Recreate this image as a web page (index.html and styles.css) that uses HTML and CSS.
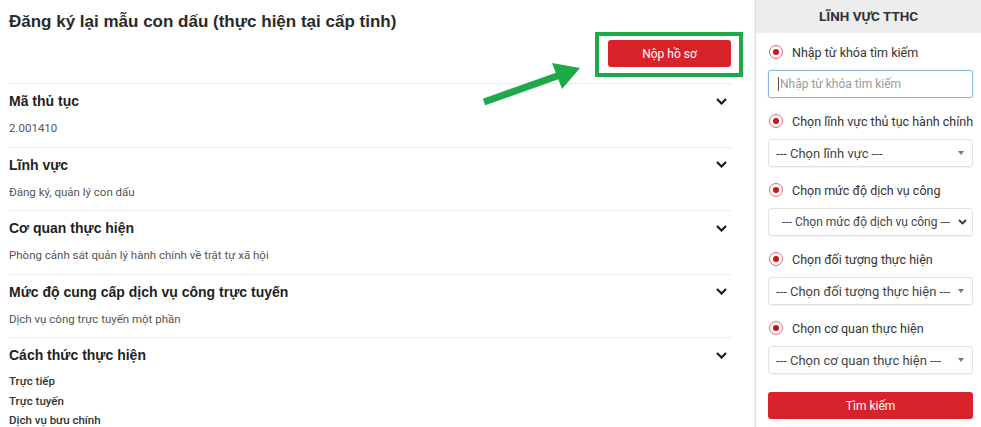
FILE: index.html
```html
<!DOCTYPE html>
<html lang="vi">
<head>
<meta charset="utf-8">
<title>Đăng ký lại mẫu con dấu</title>
<link rel="stylesheet" href="styles.css">
</head>
<body>
<div class="page">
  <main class="main">
    <h1 class="title">Đăng ký lại mẫu con dấu (thực hiện tại cấp tỉnh)</h1>
    <div class="cta-row">
      <div class="cta">
        <button class="btn-submit" type="button">Nộp hồ sơ</button>
        <span class="frame"></span>
      </div>
    </div>
    <svg class="arrow" width="600" height="120" viewBox="0 0 600 120" aria-hidden="true">
      <line x1="484" y1="102" x2="560" y2="75" stroke="#1eaa49" stroke-width="7" stroke-linecap="butt"/>
      <polygon points="580,68 552,63 562,89" fill="#1eaa49"/>
    </svg>

    <section class="item">
      <div class="item-head"><h2>Mã thủ tục</h2><svg class="chev" width="11" height="7" viewBox="0 0 11 7"><path d="M1 1 L5.5 5.5 L10 1" fill="none" stroke="#1a1a1a" stroke-width="2.2"/></svg></div>
      <p class="item-val">2.001410</p>
    </section>
    <section class="item">
      <div class="item-head"><h2>Lĩnh vực</h2><svg class="chev" width="11" height="7" viewBox="0 0 11 7"><path d="M1 1 L5.5 5.5 L10 1" fill="none" stroke="#1a1a1a" stroke-width="2.2"/></svg></div>
      <p class="item-val">Đăng ký, quản lý con dấu</p>
    </section>
    <section class="item">
      <div class="item-head"><h2>Cơ quan thực hiện</h2><svg class="chev" width="11" height="7" viewBox="0 0 11 7"><path d="M1 1 L5.5 5.5 L10 1" fill="none" stroke="#1a1a1a" stroke-width="2.2"/></svg></div>
      <p class="item-val">Phòng cảnh sát quản lý hành chính về trật tự xã hội</p>
    </section>
    <section class="item">
      <div class="item-head"><h2>Mức độ cung cấp dịch vụ công trực tuyến</h2><svg class="chev" width="11" height="7" viewBox="0 0 11 7"><path d="M1 1 L5.5 5.5 L10 1" fill="none" stroke="#1a1a1a" stroke-width="2.2"/></svg></div>
      <p class="item-val">Dịch vụ công trực tuyến một phần</p>
    </section>
    <section class="item item-last">
      <div class="item-head"><h2>Cách thức thực hiện</h2><svg class="chev" width="11" height="7" viewBox="0 0 11 7"><path d="M1 1 L5.5 5.5 L10 1" fill="none" stroke="#1a1a1a" stroke-width="2.2"/></svg></div>
      <ul class="ways">
        <li>Trực tiếp</li>
        <li>Trực tuyến</li>
        <li>Dịch vụ bưu chính</li>
      </ul>
    </section>
  </main>

  <aside class="side">
    <div class="side-head">LĨNH VỰC TTHC</div>
    <div class="side-body">
      <div class="group">
        <label class="radio-label"><span class="radio"></span>Nhập từ khóa tìm kiếm</label>
        <div class="input"><span class="caret"></span><span class="ph">Nhập từ khóa tìm kiếm</span></div>
      </div>
      <div class="group">
        <label class="radio-label"><span class="radio"></span>Chọn lĩnh vực thủ tục hành chính</label>
        <div class="select"><span>--- Chọn lĩnh vực ---</span><span class="tri"></span></div>
      </div>
      <div class="group">
        <label class="radio-label"><span class="radio"></span>Chọn mức độ dịch vụ công</label>
        <div class="select select-alt"><span>--- Chọn mức độ dịch vụ công ---</span><svg width="9" height="6" viewBox="0 0 9 6"><path d="M1 1 L4.5 4.5 L8 1" fill="none" stroke="#333" stroke-width="1.8"/></svg></div>
      </div>
      <div class="group">
        <label class="radio-label"><span class="radio"></span>Chọn đối tượng thực hiện</label>
        <div class="select"><span>--- Chọn đối tượng thực hiện ---</span><span class="tri"></span></div>
      </div>
      <div class="group">
        <label class="radio-label"><span class="radio"></span>Chọn cơ quan thực hiện</label>
        <div class="select"><span>--- Chọn cơ quan thực hiện ---</span><span class="tri"></span></div>
      </div>
      <button class="btn-search" type="button">Tìm kiếm</button>
    </div>
  </aside>
</div>
</body>
</html>
```
FILE: styles.css
```css
* { box-sizing: border-box; }
html, body { margin: 0; padding: 0; background: #fff; }
body { font-family: Roboto, "Liberation Sans", Arial, sans-serif; color: #333; }

.page { display: flex; align-items: flex-start; width: 981px; height: 427px; overflow: hidden; }

.main { position: relative; width: 731px; padding-left: 9px; margin-right: 24px; flex: none; }

.title {
  margin: 10px 0 0;
  font-family: "Liberation Sans", Arial, sans-serif;
  font-size: 17px; line-height: 23px; font-weight: bold; color: #2a2a2a;
}

.cta-row { display: flex; justify-content: flex-end; margin-top: 7px; margin-bottom: 16px; }
.cta { position: relative; }
.btn-submit {
  display: block; width: 123px; height: 27px; border: 0; border-radius: 3px;
  background: #d8232a; color: #fff; font-family: Roboto, sans-serif; font-size: 12px; padding: 0;
}
.frame { position: absolute; left: -13px; right: -12px; top: -8px; bottom: -10px; border: 4px solid #1eaa49; }
.arrow { position: absolute; left: 0; top: 0; pointer-events: none; }

.item { border-top: 1px solid #ececec; padding: 8px 0 10.5px; }
.item-head { display: flex; justify-content: space-between; align-items: center; height: 18px; }
.item-head h2 {
  margin: 0; font-family: "Liberation Sans", Arial, sans-serif;
  font-size: 14px; line-height: 18px; font-weight: bold; color: #1f1f1f;
}
.chev { margin-right: 4px; }
.item-val { margin: 10px 0 0; font-size: 11.5px; line-height: 16px; color: #555; }
.ways { list-style: none; margin: 8px 0 0; padding: 0; }
.ways li { font-size: 11.5px; line-height: 19.5px; font-weight: 500; color: #333; }

.side { flex: 1; border-left: 1px solid #e0e0e0; box-shadow: -1px 0 0 #f0f0f0; min-height: 427px; }
.side-head {
  height: 33px; line-height: 33px; background: #ededed; text-align: center;
  font-size: 13.5px; font-weight: bold; color: #333;
}
.side-body { padding: 10px 8px 0 12px; }
.group { margin-bottom: 14px; }
.group:last-of-type { margin-bottom: 18px; }
.radio-label {
  display: flex; align-items: center; height: 18px; font-size: 12.5px; color: #333;
  margin-bottom: 9px; white-space: nowrap;
}
.radio {
  width: 14px; height: 14px; border-radius: 50%; border: 1.5px solid #e4676c;
  margin: 0 9px 0 1px; display: flex; align-items: center; justify-content: center; flex: none;
}
.radio::after { content: ""; width: 6px; height: 6px; border-radius: 50%; background: #d0111b; }

.input {
  height: 28px; border: 1px solid #86b5e6; border-radius: 3px; box-shadow: 0 0 2px rgba(80,140,210,.35);
  display: flex; align-items: center; padding-left: 9px;
}
.caret { width: 1px; height: 14px; background: #555; margin-right: 1px; }
.ph { font-size: 12px; color: #9a9a9a; }

.select {
  height: 28px; border: 1px solid #e2e2e2; border-radius: 3px; box-shadow: 0 1px 1px rgba(0,0,0,.05);
  display: flex; align-items: center; justify-content: space-between; padding: 0 8px 0 7px;
  font-size: 13px; color: #444; white-space: nowrap;
}
.select-alt { font-size: 12px; padding-left: 13px; padding-right: 5px; }
.tri { width: 0; height: 0; border-left: 3px solid transparent; border-right: 3px solid transparent; border-top: 4px solid #777; }

.btn-search {
  display: block; width: 100%; height: 27px; border: 0; border-radius: 3px;
  background: #d8232a; color: #fff; font-family: Roboto, sans-serif; font-size: 12px; padding: 0;
}
```
